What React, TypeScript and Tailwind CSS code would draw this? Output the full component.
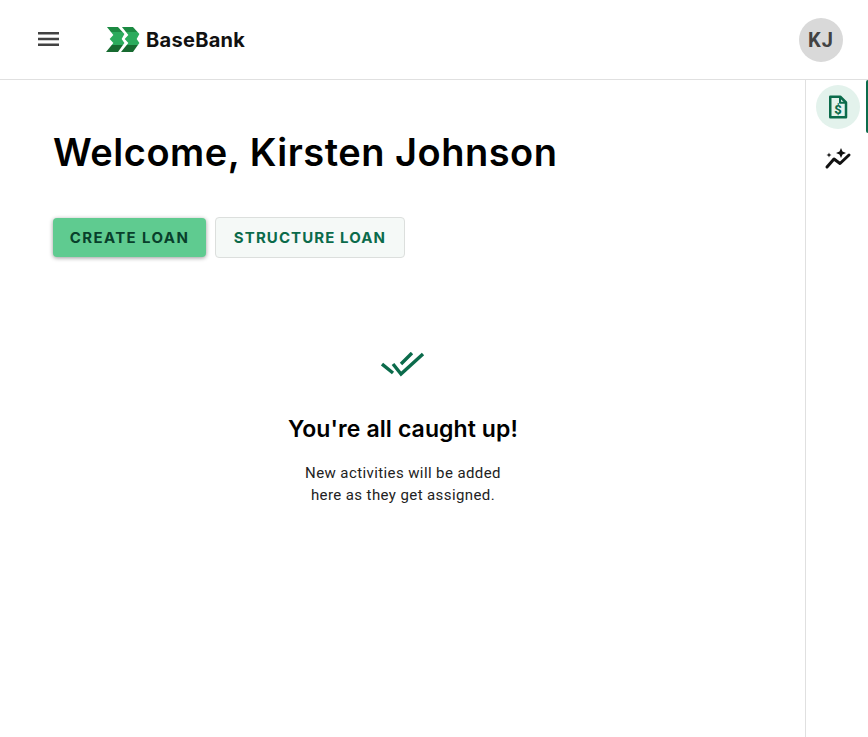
const heading = { fontFamily: '"Inter", "Liberation Sans", sans-serif' };

function Chevron({ x }: { x: number }) {
  return (
    <g transform={`translate(${x} 0) scale(0.92 1)`}>
      <polygon points="1,0 13,0 18,5 5.400,5" fill="#1c8a42" />
      <polygon points="5.400,5 18,5 20,7 17,12 20,16 18.400,18 6.200,18 8,16 4,12 8,8" fill="#2bab5c" />
      <polygon points="6.200,18 18.400,18 13,25 0,25" fill="#176a30" />
    </g>
  );
}

function Logo() {
  return (
    <svg width="34" height="25" viewBox="0 0 34 25" aria-hidden="true">
      <Chevron x={0} />
      <Chevron x={15} />
    </svg>
  );
}

function Header() {
  return (
    <header className="flex h-20 items-center justify-between border-b border-[#e0e0e0] bg-white pl-[38px] pr-[25px]">
      <div className="flex items-center">
        <svg width="21" height="14" viewBox="0 0 21 14" aria-hidden="true" className="mt-[-2px]">
          <path d="M0 1.300h21M0 7h21M0 12.700h21" stroke="#424242" strokeWidth="2.400" />
        </svg>
        <div className="ml-[47px] flex items-center gap-[6px]">
          <Logo />
          <span className="text-[20px] font-bold tracking-[0.3px] text-[#111]" style={heading}>BaseBank</span>
        </div>
      </div>
      <div className="flex h-11 w-11 items-center justify-center rounded-full bg-[#d9d9d9] text-[20px] font-bold tracking-[1px] text-[#424242]" style={{ fontFamily: '"Roboto", sans-serif' }}>
        KJ
      </div>
    </header>
  );
}

function SideRail() {
  return (
    <aside className="flex w-[63px] flex-col items-start border-l border-[#e0e0e0] pl-[10px]">
      <div className="relative flex h-[53px] w-full items-center">
        <div className="flex h-11 w-11 items-center justify-center rounded-full bg-[#e3f2ec]">
          <svg width="22" height="24" viewBox="0 0 22 24" fill="none" stroke="#0b6b4b" strokeWidth="2.500" strokeLinejoin="round" aria-hidden="true">
            <path d="M3.250 1.750h10L19 7.500v14.750H3.250z" />
            <path d="M13 2V7.750H18.750" strokeWidth="2" />
            <text x="11" y="19" textAnchor="middle" fontSize="13" fontWeight="800" fill="#0b6b4b" stroke="none" fontFamily="Roboto, sans-serif">$</text>
          </svg>
        </div>
        <div className="absolute right-0 top-0 h-[53px] w-[2px] rounded-l bg-[#0b6b4b]" />
      </div>
      <div className="mt-[4px] flex h-11 w-11 items-center justify-center">
        <svg width="28" height="22" viewBox="0 0 28 22" fill="none" aria-hidden="true">
          <path d="M3 19l7-8 6 4.500L25 7" stroke="#111" strokeWidth="3" strokeLinecap="round" strokeLinejoin="round" />
          <path d="M17 0l1.500 3.500 3.500 1.500-3.500 1.500L17 10l-1.500-3.500-3.500-1.500 3.500-1.500z" fill="#111" />
          <path d="M5 4.500l.7 1.800 1.800.7-1.800.7L5 9.500l-.7-1.800-1.800-.7 1.800-.7z" fill="#111" />
        </svg>
      </div>
    </aside>
  );
}

function EmptyState() {
  return (
    <section className="mt-[94px] flex w-[700px] flex-col items-center">
      <svg width="44" height="26" viewBox="0 0 44 26" fill="none" stroke="#0b6b4b" strokeWidth="3.400" aria-hidden="true">
        <path d="M1 12l11 9M12 12l8 10L42 2M20 12L31 1" />
      </svg>
      <h2 className="mt-[36px] text-[23px] font-semibold leading-[30px] tracking-[0.1px] text-black" style={heading}>You're all caught up!</h2>
      <p className="mt-[18px] text-center text-[15px] leading-[22px] tracking-[0.4px] text-[#222]" style={{ fontFamily: '"Roboto", sans-serif' }}>
        New activities will be added<br />here as they get assigned.
      </p>
    </section>
  );
}

export default function App() {
  return (
    <div className="flex h-[737px] w-[868px] flex-col overflow-hidden bg-white">
      <Header />
      <div className="flex flex-1 justify-between">
        <main className="flex-1 pl-[53px] pt-[47px]">
          <h1 className="text-[38px] font-semibold leading-[50px] tracking-[0.5px] text-black" style={heading}>Welcome, Kirsten Johnson</h1>
          <div className="mt-[40px] flex items-center gap-[9px]">
            <button className="h-[39px] w-[153px] rounded bg-[#5fcb90] pt-[1px] text-[15px] font-bold tracking-[1.400px] text-[#083f2b] shadow-[0_1px_4px_rgba(0,0,0,0.4)]" style={heading}>CREATE LOAN</button>
            <button className="h-[41px] w-[190px] rounded border border-[#dcdfdd] bg-[#f5f9f7] pt-[1px] text-[15px] font-bold tracking-[1.100px] text-[#0b6b4b]" style={heading}>STRUCTURE LOAN</button>
          </div>
          <EmptyState />
        </main>
        <SideRail />
      </div>
    </div>
  );
}
